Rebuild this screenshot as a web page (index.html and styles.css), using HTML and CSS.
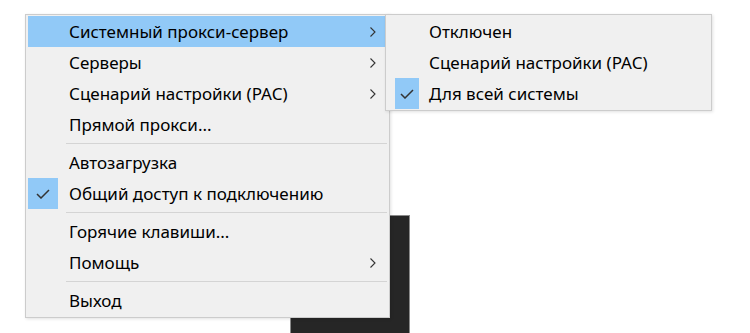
FILE: index.html
```html
<!DOCTYPE html>
<html lang="ru">
<head>
    <meta charset="UTF-8">
    <title>Меню</title>
    <link rel="stylesheet" href="styles.css">
</head>
<body>
    <div class="desktop">
        <div class="dark-window"></div>

        <ul class="menu main-menu">
            <li class="item active"><span class="check"></span><span class="label">Системный прокси-сервер</span><svg class="arrow" viewBox="0 0 6 10"><path d="M0.5 0.5 L5 5 L0.5 9.5" /></svg></li>
            <li class="item"><span class="check"></span><span class="label">Серверы</span><svg class="arrow" viewBox="0 0 6 10"><path d="M0.5 0.5 L5 5 L0.5 9.5" /></svg></li>
            <li class="item"><span class="check"></span><span class="label">Сценарий настройки (PAC)</span><svg class="arrow" viewBox="0 0 6 10"><path d="M0.5 0.5 L5 5 L0.5 9.5" /></svg></li>
            <li class="item"><span class="check"></span><span class="label">Прямой прокси...</span></li>
            <li class="sep"></li>
            <li class="item"><span class="check"></span><span class="label">Автозагрузка</span></li>
            <li class="item"><span class="check on"><svg viewBox="0 0 14 10"><path d="M1 5 L5 9 L13 1" /></svg></span><span class="label">Общий доступ к подключению</span></li>
            <li class="sep"></li>
            <li class="item"><span class="check"></span><span class="label">Горячие клавиши...</span></li>
            <li class="item"><span class="check"></span><span class="label">Помощь</span><svg class="arrow" viewBox="0 0 6 10"><path d="M0.5 0.5 L5 5 L0.5 9.5" /></svg></li>
            <li class="sep"></li>
            <li class="item"><span class="check"></span><span class="label">Выход</span></li>
        </ul>

        <ul class="menu sub-menu">
            <li class="item"><span class="check"></span><span class="label">Отключен</span></li>
            <li class="item"><span class="check"></span><span class="label">Сценарий настройки (PAC)</span></li>
            <li class="item"><span class="check on"><svg viewBox="0 0 14 10"><path d="M1 5 L5 9 L13 1" /></svg></span><span class="label">Для всей системы</span></li>
        </ul>
    </div>
</body>
</html>
```

FILE: styles.css
```css
:root {
    --menu-bg: #f0f0f0;
    --menu-border: #cccccc;
    --highlight: #91c9f7;
    --text-color: #000;
    --glyph-color: #333;
}
body {
    margin: 0;
    background-color: #fff;
    font-family: 'Noto Sans', 'Segoe UI', sans-serif;
    font-size: 17px;
    color: var(--text-color);
}
.desktop {
    position: relative;
    width: 750px;
    height: 333px;
    overflow: hidden;
}
.dark-window {
    position: absolute;
    left: 290px;
    top: 215px;
    width: 118px;
    height: 130px;
    background-color: #262626;
    border: 1px solid #8a8a8a;
}
.menu {
    position: absolute;
    list-style-type: none;
    margin: 0;
    background-color: var(--menu-bg);
    border: 1px solid var(--menu-border);
    box-shadow: 1px 1px 3px rgba(0,0,0,0.12);
}
.main-menu {
    left: 25px;
    top: 14px;
    width: 359px;
    padding: 1px 2px 1px 2px;
}
.sub-menu {
    left: 385px;
    top: 14px;
    width: 315px;
    padding: 1px 1px 1px 9px;
}
.item {
    height: 31px;
    display: flex;
    align-items: center;
}
.item.active {
    background-color: var(--highlight);
}
.check {
    width: 30px;
    height: 31px;
    display: flex;
    align-items: center;
    justify-content: center;
    margin-right: 11px;
}
.sub-menu .check {
    width: 24px;
    margin-right: 10px;
}
.check.on {
    background-color: var(--highlight);
}
.check svg {
    width: 14px;
    height: 10px;
    fill: none;
    stroke: var(--glyph-color);
    stroke-width: 1.5;
}
.label {
    flex-grow: 1;
    white-space: nowrap;
    line-height: 31px;
}
.arrow {
    width: 6px;
    height: 10px;
    margin-right: 11px;
    fill: none;
    stroke: var(--glyph-color);
    stroke-width: 1.1;
}
.sep {
    height: 7px;
    display: flex;
    align-items: center;
    margin-left: 38px;
}
.sep::after {
    content: '';
    flex-grow: 1;
    height: 1px;
    background-color: #d4d4d4;
}
```
